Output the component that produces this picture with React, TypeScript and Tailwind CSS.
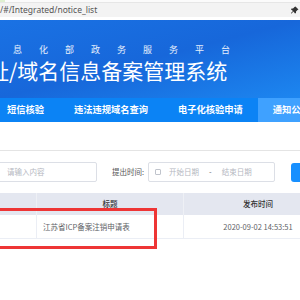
import React from "react";

const cjk = "font-['Noto_Sans_CJK_SC','Noto_Sans',sans-serif]";

function PinIcon() {
  return (
    <svg width="8" height="8" viewBox="0 0 16 16" className="shrink-0">
      <path d="M9 1l6 6-2 1-3 3 0 3-2 1-3-4-4 4-1 0 0-1 4-4-4-3 1-2 3 0 3-3z" fill="#333" />
    </svg>
  );
}

export default function App() {
  const nav = ["短信核验", "违法违规域名查询", "电子化核验申请"];
  return (
    <div className={`relative w-[300px] h-[300px] overflow-hidden bg-white ${cjk}`}>
      {/* browser chrome */}
      <div className="h-[3px] flex bg-[#fbfbfb] border-b border-[#e6e6e6]">
        <div className="w-[5px] bg-[#dff0d0]" />
      </div>
      <div className="h-[14px] bg-[#f3f3f3] flex items-center justify-between pr-[1px]">
        <span className="text-[8.5px] leading-none text-[#555] font-['Noto_Sans',sans-serif] whitespace-nowrap">
          /#/Integrated/notice_list
        </span>
        <PinIcon />
      </div>
      <div className="h-[3px] bg-white" />

      {/* banner */}
      <div className="h-[78px] overflow-hidden bg-gradient-to-br from-[#1a72e4] via-[#1767da] to-[#1d86f0] pt-[25px] whitespace-nowrap">
        <div className="ml-[13px] text-[9px] leading-[9px] tracking-[17px] text-white/90">
          息化部政务服务平台
        </div>
        <div className="ml-[-12px] mt-[6px] text-[21px] leading-[21px] text-white">
          址/域名信息备案管理系统
        </div>
      </div>

      {/* nav */}
      <div className="h-[24px] bg-[#0b83f5] flex items-stretch ml-[-8px] whitespace-nowrap">
        {nav.map((n) => (
          <div key={n} className="shrink-0 px-[15px] flex items-center text-[9.25px] font-bold text-white">
            {n}
          </div>
        ))}
        <div className="shrink-0 px-[15px] flex items-center text-[9.25px] font-bold text-white bg-[#3fa1ff] flex-1">
          通知公告
        </div>
      </div>

      <div className="h-[28px]" />
      <div className="h-px bg-[#e4e4e4]" />

      {/* search row */}
      <div className="mt-[11px] flex items-center whitespace-nowrap text-[7.5px]">
        <div className="shrink-0 ml-[-10px] w-[107px] h-[20px] border border-[#dcdfe6] rounded-[2px] flex items-center pl-[16px] text-[#b5b8bf]">
          请输入内容
        </div>
        <span className="shrink-0 ml-[15px] text-[#555]">提出时间:</span>
        <div className="shrink-0 ml-[4px] w-[127px] h-[20px] border border-[#dcdfe6] rounded-[2px] flex items-center pl-[6px] text-[#b5b8bf]">
          <span className="w-[6px] h-[6px] border border-[#c0c4cc] rounded-[1px]" />
          <span className="ml-[8px]">开始日期</span>
          <span className="ml-[10px] text-[#666]">-</span>
          <span className="ml-[10px]">结束日期</span>
        </div>
        <div className="shrink-0 ml-[16px] w-[40px] h-[19px] rounded-[3px] bg-[#1890ff]" />
      </div>

      {/* table */}
      <div className="mt-[11px] ml-[-110px] w-[442px] text-[7.5px] whitespace-nowrap">
        <div className="h-[22px] bg-[#e4e7f0] grid grid-cols-[147px_147px_148px] text-[#333] font-medium">
          <div className="border-r border-[#eef0f5]" />
          <div className="border-r border-[#eef0f5] flex items-center justify-center">标题</div>
          <div className="flex items-center justify-center">发布时间</div>
        </div>
        <div className="h-[24px] grid grid-cols-[147px_147px_148px] text-[#606266] border-b border-[#ebeef5]">
          <div className="border-r border-[#ebeef5]" />
          <div className="border-r border-[#ebeef5] flex items-center pl-[6px]">江苏省ICP备案注销申请表</div>
          <div className="flex items-center justify-center">2020-09-02 14:53:51</div>
        </div>
      </div>

      {/* annotation */}
      <div className="absolute left-[-10px] top-[208px] w-[167px] h-[41px] border-[3px] border-[#ee3535]" />
    </div>
  );
}
